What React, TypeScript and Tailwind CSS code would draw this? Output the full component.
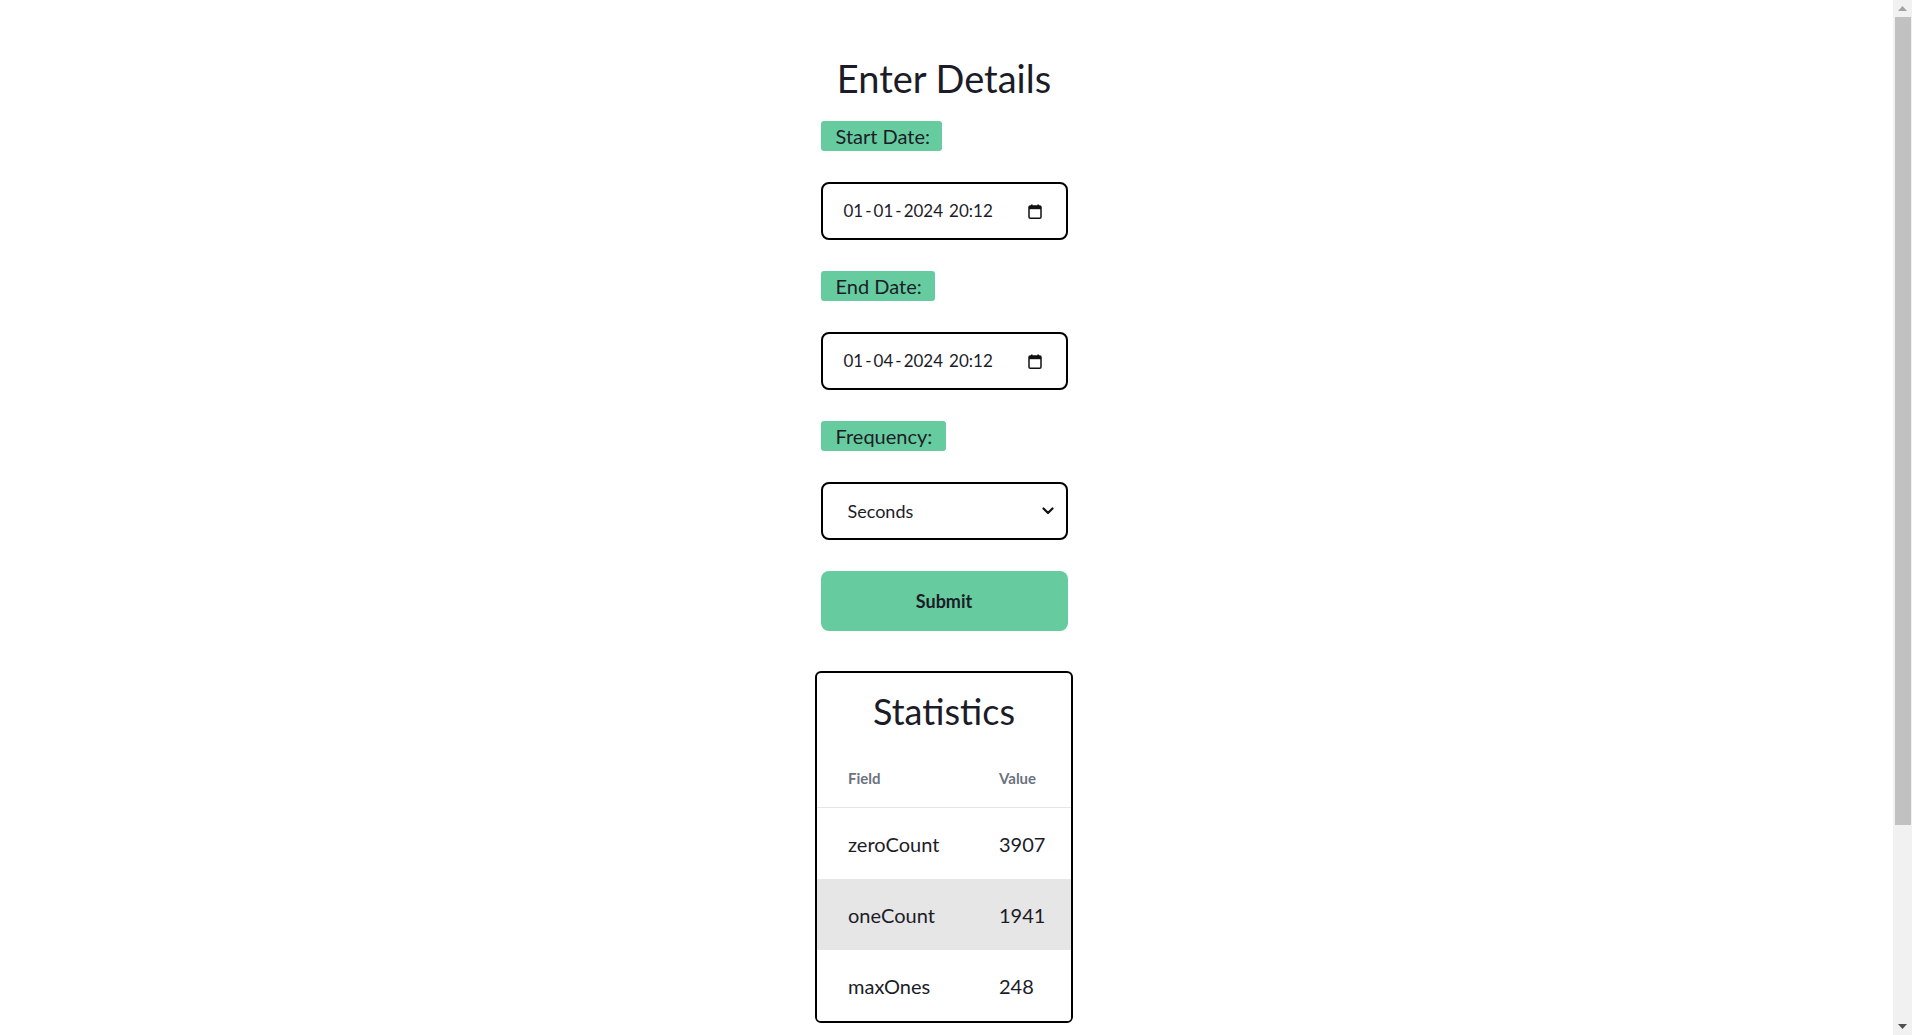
import React from "react";

const font = { fontFamily: "Lato, 'Open Sans', sans-serif" };

function CalendarIcon() {
  return (
    <svg width="14" height="15" viewBox="0 0 14 15" className="shrink-0">
      <rect x="3" y="0.5" width="1.6" height="2.5" fill="#111" />
      <rect x="9.4" y="0.5" width="1.6" height="2.5" fill="#111" />
      <rect x="1" y="2" width="12" height="12.2" rx="1.3" fill="none" stroke="#111" strokeWidth="1.5" />
      <rect x="1" y="2" width="12" height="3.2" fill="#111" />
    </svg>
  );
}

function Chevron() {
  return (
    <svg width="12" height="8" viewBox="0 0 12 8" className="shrink-0">
      <path d="M1.5 1.5 L6 6 L10.5 1.5" fill="none" stroke="#111" strokeWidth="2.2" strokeLinecap="round" strokeLinejoin="round" />
    </svg>
  );
}

function Label({ text, w }: { text: string; w: string }) {
  return (
    <div className={`${w} h-[30px] rounded-[3px] bg-[#66cc9f] flex items-center pl-[15px] text-[20px] text-[#1c1c28]`}>
      {text}
    </div>
  );
}

function DateBox({ day, month, year, time }: { day: string; month: string; year: string; time: string }) {
  return (
    <div className="w-[247px] h-[58px] rounded-[8px] border-2 border-black bg-white flex items-center pl-[21px] pr-[24px] justify-between">
      <span className="text-[17px] text-[#1c1c28] flex items-center">
        <span>{day}</span>
        <span className="mx-[2px]">-</span>
        <span>{month}</span>
        <span className="mx-[2px]">-</span>
        <span>{year}</span>
        <span className="ml-[6px]">{time}</span>
      </span>
      <CalendarIcon />
    </div>
  );
}

function Scrollbar() {
  return (
    <div className="w-[19px] h-screen bg-[#f1f1f1] flex flex-col items-center shrink-0">
      <div className="h-[17px] w-full flex items-center justify-center">
        <svg width="9" height="5" viewBox="0 0 9 5">
          <path d="M0 5 L4.5 0 L9 5 Z" fill="#a3a3a3" />
        </svg>
      </div>
      <div className="h-[808px] w-[16px] ml-[1px] bg-[#c1c1c1]" />
      <div className="flex-1" />
      <div className="h-[17px] w-full flex items-center justify-center">
        <svg width="9" height="5" viewBox="0 0 9 5">
          <path d="M0 0 L9 0 L4.5 5 Z" fill="#505050" />
        </svg>
      </div>
    </div>
  );
}

const rows = [
  { field: "zeroCount", value: "3907", shade: false },
  { field: "oneCount", value: "1941", shade: true },
  { field: "maxOnes", value: "248", shade: false },
];

export default function App() {
  return (
    <div className="h-screen flex overflow-hidden bg-white" style={font}>
      <div className="flex-1 flex justify-center pr-[5px] overflow-hidden">
        <div className="flex flex-col items-center pt-[55px]">
          <h1 className="text-[38px] leading-[46px] text-[#1c1c28] mb-[20px]">Enter Details</h1>

          <div className="w-[247px] flex flex-col gap-[31px]">
            <Label text="Start Date:" w="w-[121px]" />
            <DateBox day="01" month="01" year="2024" time="20:12" />
            <Label text="End Date:" w="w-[114px]" />
            <DateBox day="01" month="04" year="2024" time="20:12" />
            <Label text="Frequency:" w="w-[125px]" />
            <div className="w-[247px] h-[58px] rounded-[8px] border-2 border-black bg-white flex items-center pl-[25px] pr-[12px] justify-between">
              <span className="text-[18px] text-[#1c1c28]">Seconds</span>
              <Chevron />
            </div>
            <button className="w-[247px] h-[60px] rounded-[8px] bg-[#66cc9f] text-[18px] font-bold text-[#1c1c28]">
              Submit
            </button>
          </div>

          <div className="mt-[40px] w-[258px] rounded-[6px] border-2 border-black overflow-hidden shrink-0">
            <h2 className="text-[36px] leading-[44px] text-center text-[#1c1c28] mt-[16px] mb-[17px]">Statistics</h2>
            <div className="h-[58px] flex items-center pl-[31px] border-b border-[#e5e5e5] text-[15px] font-bold text-[#6b7280]">
              <div className="w-[151px]">Field</div>
              <div>Value</div>
            </div>
            {rows.map((r) => (
              <div
                key={r.field}
                className={`h-[71px] flex items-center pl-[31px] text-[20px] text-[#1c1c28] ${r.shade ? "bg-[#e6e6e6]" : "bg-white"}`}
              >
                <div className="w-[151px]">{r.field}</div>
                <div>{r.value}</div>
              </div>
            ))}
          </div>
        </div>
      </div>
      <Scrollbar />
    </div>
  );
}
